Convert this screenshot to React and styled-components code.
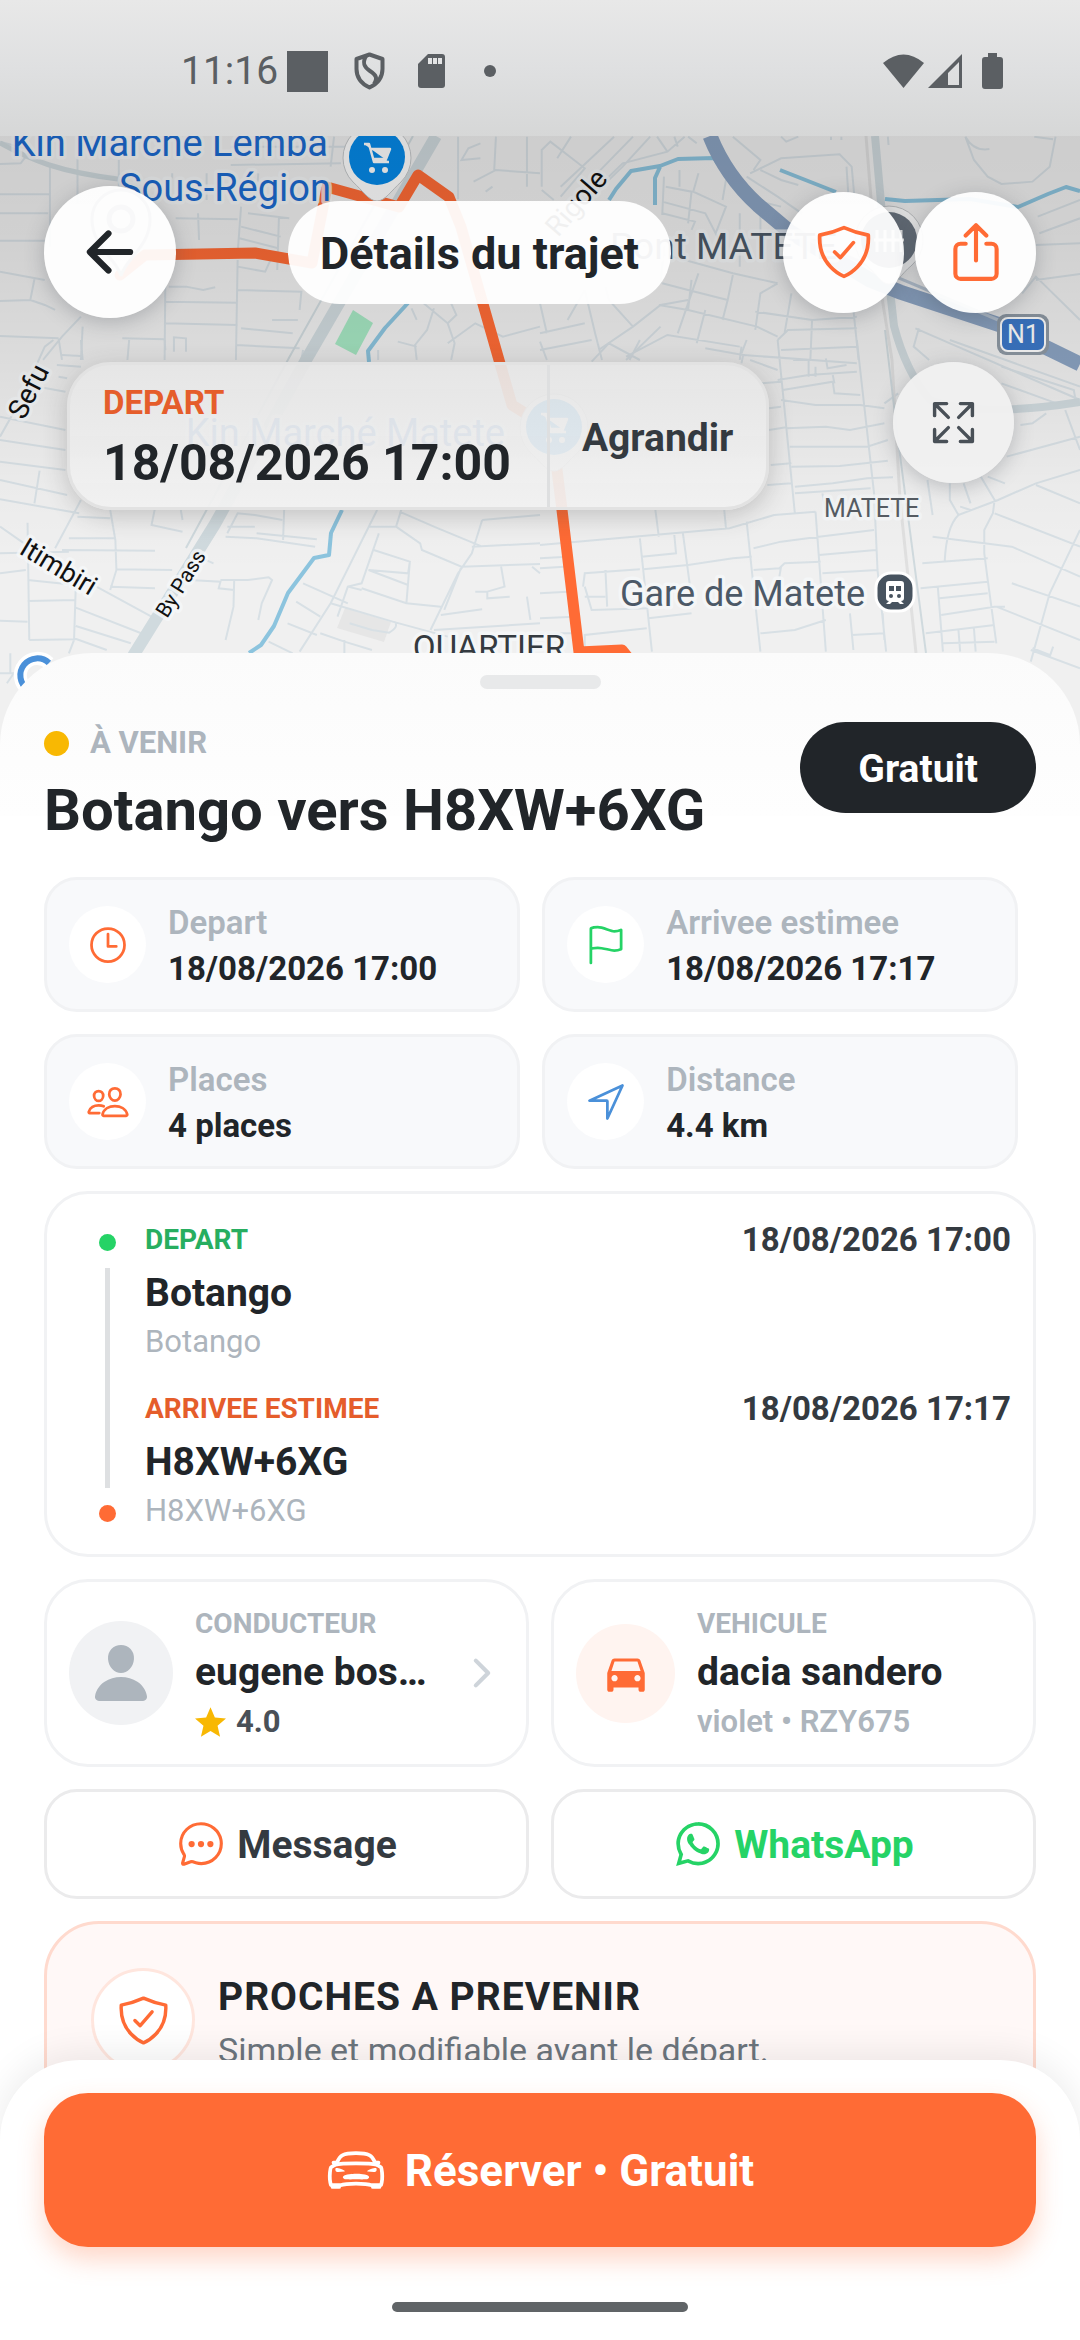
import React from "react";
import styled, { createGlobalStyle } from "styled-components";
import {
  IoArrowBack,
  IoShieldCheckmarkOutline,
  IoShareOutline,
  IoExpandOutline,
  IoTimeOutline,
  IoFlagOutline,
  IoPeopleOutline,
  IoNavigateOutline,
  IoPerson,
  IoChevronForward,
  IoChatbubbleEllipsesOutline,
  IoLogoWhatsapp,
  IoCarSportOutline,
} from "react-icons/io5";
import { MdDirectionsCar } from "react-icons/md";

const color = {
  orange: "#ff6b35",
  orangeDark: "#e55d2b",
  green: "#25d366",
  greenDark: "#27ae60",
  blue: "#4a90d9",
  yellow: "#f8b803",
  ink: "#212529",
  inkSoft: "#343a40",
  slate: "#495057",
  grey: "#6c757d",
  mute: "#adb5bd",
  line: "#f1f2f4",
};

const GlobalStyle = createGlobalStyle`
  *, *::before, *::after { box-sizing: border-box; }
  body {
    margin: 0;
    background: #fff;
    color: ${color.ink};
    font-family: Roboto, "Liberation Sans", sans-serif;
  }
  h1, h2, p { margin: 0; }
  button { font-family: inherit; cursor: pointer; }
  svg { display: block; flex: none; }
`;

const Screen = styled.div`
  display: flex;
  flex-direction: column;
  height: 100vh;
  overflow: hidden;
`;

/* Map header */

const Hero = styled.header`
  position: relative;
  flex: none;
  padding-bottom: 306px;
  margin-bottom: -163px;
  overflow: hidden;
  background: #efefef;
`;

const MapCanvas = styled.svg`
  position: absolute;
  inset: 0;
  width: 100%;
  height: 100%;
`;

const StatusBar = styled.div`
  position: relative;
  display: flex;
  align-items: center;
  height: 136px;
  padding: 6px 77px 0 181px;
  color: #5b5f63;
  background: linear-gradient(#e8e8e8, #dfe0e1 50%, #d6d7d7);
`;

const Clock = styled.time`
  font-size: 39px;
  line-height: 46px;
  margin-right: 9px;
`;

const StatusIcons = styled.div`
  display: flex;
  align-items: center;
  gap: ${(p) => p.$gap}px;
  margin-left: ${(p) => (p.$end ? "auto" : "0")};
`;

const TopRow = styled.div`
  position: relative;
  display: flex;
  align-items: center;
  justify-content: space-between;
  padding: 50px 44px 0;
`;

const ActionGroup = styled.div`
  display: flex;
  gap: 11px;
`;

const RoundButton = styled.button`
  display: flex;
  align-items: center;
  justify-content: center;
  width: ${(p) => p.$size}px;
  height: ${(p) => p.$size}px;
  padding: 0;
  border: 0;
  border-radius: 50%;
  background: ${(p) => (p.$dim ? "rgba(240, 240, 240, 0.96)" : "rgba(255, 255, 255, 0.94)")};
  color: ${(p) => p.$tone};
  box-shadow: 0 4px 20px rgba(60, 70, 80, 0.28);
`;

const ScreenTitle = styled.h1`
  padding: 27px 32px 24px;
  border-radius: 52px;
  background: rgba(255, 255, 255, 0.94);
  font-size: 45px;
  font-weight: 700;
  line-height: 52px;
`;

const MapRow = styled.div`
  position: relative;
  display: flex;
  align-items: flex-start;
  justify-content: space-between;
  padding: 44px 66px 0 67px;
`;

const DepartureCard = styled.div`
  display: flex;
  height: 148px;
  border: 3px solid #e2e2e2;
  border-radius: 44px;
  background: linear-gradient(rgba(230, 230, 230, 0.93), rgba(241, 241, 241, 0.94));
  box-shadow: 0 6px 24px rgba(60, 60, 60, 0.24);
`;

const DepartureText = styled.div`
  display: flex;
  flex-direction: column;
  justify-content: center;
  gap: 12px;
  padding: 2px 36px 0 33px;
  border-right: 3px solid #dedfe0;
`;

const DepartureLabel = styled.span`
  color: ${color.orangeDark};
  font-size: 33px;
  font-weight: 700;
  line-height: 39px;
`;

const DepartureTime = styled.time`
  font-size: 50px;
  font-weight: 700;
  line-height: 58px;
`;

const EnlargeButton = styled.button`
  padding: 3px 33px 0 32px;
  border: 0;
  background: none;
  color: ${color.inkSoft};
  font-size: 39px;
  font-weight: 700;
  line-height: 46px;
`;

/* Sheet */

const Sheet = styled.main`
  position: relative;
  flex: 1;
  min-height: 0;
  overflow: hidden;
  padding: 22px 44px 0;
  border-radius: 92px 92px 0 0;
  background: linear-gradient(#fbfbfb, #fefefe 163px, #fff 163px);
`;

const Handle = styled.div`
  width: 121px;
  height: 14px;
  margin: 0 auto 33px;
  border-radius: 7px;
  background: #e8e9ea;
`;

const TripHead = styled.div`
  display: flex;
  align-items: flex-start;
  justify-content: space-between;
`;

const TripStatus = styled.p`
  display: flex;
  align-items: center;
  gap: 21px;
  margin-top: 3px;
  color: ${color.mute};
  font-size: 31px;
  font-weight: 700;
  line-height: 36px;

  &::before {
    content: "";
    width: 25px;
    height: 25px;
    border-radius: 50%;
    background: ${color.yellow};
  }
`;

const TripTitle = styled.h2`
  margin-top: 14px;
  font-size: 58px;
  font-weight: 700;
  line-height: 70px;
`;

const PriceTag = styled.span`
  padding: 24px 58px 21px;
  border-radius: 46px;
  background: ${color.ink};
  color: #fff;
  font-size: 39px;
  font-weight: 700;
  line-height: 46px;
`;

const InfoGrid = styled.div`
  display: grid;
  grid-template-columns: 48% 48%;
  gap: 22px;
  margin-top: 32px;
`;

const InfoCard = styled.div`
  display: flex;
  align-items: center;
  gap: 22px;
  height: 135px;
  padding: 0 22px;
  border: 3px solid ${color.line};
  border-radius: 33px;
  background: #f8f9fb;
`;

const InfoText = styled.div`
  padding-top: 2px;
  font-size: 33px;
  line-height: 46px;
`;

const IconDisc = styled.span`
  display: flex;
  flex: none;
  align-items: center;
  justify-content: center;
  width: ${(p) => p.$size}px;
  height: ${(p) => p.$size}px;
  border: ${(p) => (p.$ring ? `3px solid ${p.$ring}` : "0")};
  border-radius: 50%;
  background: ${(p) => p.$fill};
  color: ${(p) => p.$tone};
`;

const InfoLabel = styled.p`
  color: ${color.mute};
  font-weight: 600;
`;

const InfoValue = styled.p`
  font-weight: 700;
`;

const RouteCard = styled.section`
  display: flex;
  gap: 29px;
  margin-top: 22px;
  padding: 26px 22px 23px 52px;
  border: 3px solid ${color.line};
  border-radius: 44px;
`;

const RouteRail = styled.div`
  display: flex;
  flex-direction: column;
  align-items: center;
  gap: 17px;
  padding: 14px 0 9px;

  &::before,
  &::after {
    content: "";
    width: 17px;
    height: 17px;
    border-radius: 50%;
    background: ${color.green};
  }

  &::after {
    background: ${color.orange};
  }
`;

const RailLine = styled.span`
  flex: 1;
  width: 5px;
  background: #dee0e2;
`;

const Stops = styled.div`
  flex: 1;
  display: flex;
  flex-direction: column;
  gap: 27px;
`;

const StopHead = styled.div`
  display: flex;
  align-items: center;
  justify-content: space-between;
  margin-bottom: 10px;
`;

const Caption = styled.p`
  color: ${(p) => p.$tone || color.mute};
  font-size: 28px;
  font-weight: 700;
  line-height: 36px;
`;

const StopTime = styled.time`
  color: ${color.inkSoft};
  font-size: 33px;
  font-weight: 700;
  line-height: 39px;
`;

const Name = styled.p`
  overflow: hidden;
  font-size: 39px;
  font-weight: 700;
  line-height: 48px;
  text-overflow: ellipsis;
  white-space: nowrap;
`;

const StopPlace = styled.p`
  margin-top: 5px;
  color: ${color.mute};
  font-size: 31px;
  line-height: 40px;
`;

const Pair = styled.div`
  display: grid;
  grid-template-columns: 1fr 1fr;
  gap: 22px;
  margin-top: 22px;
`;

const PersonCard = styled.section`
  display: flex;
  align-items: center;
  gap: 22px;
  min-width: 0;
  height: 188px;
  padding: 0 22px;
  border: 3px solid ${color.line};
  border-radius: 44px;
`;

const PersonText = styled.div`
  flex: 1;
  display: flex;
  flex-direction: column;
  gap: 6px;
  min-width: 0;
  padding-top: 2px;
`;

const Detail = styled.p`
  display: flex;
  align-items: center;
  gap: 10px;
  color: ${(p) => p.$tone};
  font-size: 31px;
  font-weight: ${(p) => p.$weight};
  line-height: 40px;
`;

const ContactButton = styled.button`
  display: flex;
  align-items: center;
  justify-content: center;
  gap: 11px;
  height: 110px;
  border: 3px solid #ebebec;
  border-radius: 33px;
  background: #fff;
  color: ${(p) => p.$tone};
  font-size: 39px;
  font-weight: 700;
  line-height: 46px;

  svg {
    color: ${(p) => p.$iconTone};
  }
`;

const ButtonText = styled.span`
  padding-top: 2px;
`;

const AlertCard = styled.section`
  display: flex;
  align-items: flex-start;
  gap: 23px;
  margin-top: 22px;
  padding: 44px 44px 88px;
  border: 3px solid #ffdace;
  border-radius: 55px;
  background: #fff8f7;
`;

const AlertTitle = styled.h2`
  margin-top: 6px;
  font-size: 39px;
  font-weight: 700;
  line-height: 46px;
  letter-spacing: 1px;
`;

const AlertText = styled.p`
  margin-top: 10px;
  color: ${color.grey};
  font-size: 34px;
  line-height: 40px;
`;

/* Footer */

const Footer = styled.footer`
  position: relative;
  flex: none;
  margin-top: -80px;
  padding: 33px 44px 28px;
  border-radius: 80px 80px 0 0;
  background: #fff;
  box-shadow: 0 -6px 36px rgba(0, 0, 0, 0.08);
`;

const BookButton = styled.button`
  display: flex;
  align-items: center;
  justify-content: center;
  gap: 19px;
  width: 100%;
  height: 154px;
  border: 0;
  border-radius: 44px;
  background: ${color.orange};
  color: #fff;
  font-size: 44px;
  font-weight: 700;
  line-height: 52px;
  box-shadow: 0 12px 26px rgba(255, 107, 53, 0.28);
`;

const HomeBar = styled.div`
  width: 296px;
  height: 10px;
  margin: 55px auto 0;
  border-radius: 5px;
  background: #606467;
`;

/* Drawings */

const streetsNW = `M0 425L90 450 60 490 0 492M100 470L145 500 215 515 340 540M145 500L145 740M0 583L145 583M225 470L225 610 M345 480L345 560M0 640L140 640M0 722L130 722M0 815L130 840M100 838L88 900 0 903M88 900L130 915 160 930M235 950L180 1010 125 1080M0 1008L170 1015M170 1015L180 1080M240 980L235 1080M480 850L478 1080M355 1015L478 1018M505 1055L505 1012 540 1015 540 1055M478 970L690 975M690 780L685 1080M480 905L690 908M575 640L578 720M510 655L690 658M700 620L690 760M700 680L815 710M695 715L808 745M720 640L840 655M810 650L805 810M690 800L770 815 790 770 835 790M690 870L875 875 870 930M790 960L865 960M685 1035L870 1045M670 495L990 490M670 440L1010 440M600 520L600 600M970 410L960 500M500 520L500 600M750 520L745 590M490 860L540 860 590 870 625 862M1330 410L1330 598M1395 430L1360 445 1340 480 1395 475M1440 410L1435 510M1375 545L1440 510 1568 520M1410 575L1430 560M1530 410L1530 560M1568 980L1460 1010 1380 970 1300 1030M1230 910L1300 970 1320 1030 1310 1080M1300 970L1325 945 1310 910M1210 1080L1205 1035 1240 990 1260 925M1195 925L1210 960M1098 1080L1098 1050M1155 1025L1210 1040M875 1080L880 1050M700 985L850 1000`;
const streetsNE = `M5 560L5 450 30 425 130 505 60 590M50 475L90 410M60 560L215 410M100 590L270 410M150 590L240 500 320 410M130 600L240 490 370 455 420 410M340 410L370 455M390 410L400 440M430 410L455 430M5 570L40 600M360 530L355 645M355 605L480 640 520 720M355 640L450 665 440 690M365 560L440 575 430 670M405 510L405 560M460 520L445 575 540 620 510 700M540 540L530 600M620 600L700 620M600 530L690 590 760 640M640 510L700 540 750 555M610 520L700 475 870 463 905 500 912 580M890 500L895 580M560 410L640 480 620 510M700 410L715 425 750 410M845 410L845 420M875 410L875 420M1010 410L1012 435M1235 410L1260 480 1300 530 1340 552 1430 545 1480 500 1497 410M1235 410Q1260 455 1305 447M1435 410L1490 418M1450 700L1568 655M1445 650L1568 600M1400 880L1440 830 1568 960M1440 840L1568 822M1440 735L1568 730M350 850L360 740M270 720L350 760 560 820 690 850M355 850L430 870 545 900M345 915L430 930 630 980 690 1010M440 840L430 930M460 820L400 1000M560 825L545 900 530 960M690 850L640 880 625 990M625 935L790 960 920 950M790 960L785 1080M730 880L710 1000M690 1020L720 990 920 985M700 1050L920 1040M430 900L350 915 270 980 170 1050M270 980L200 900 190 860M130 870L160 1000 180 1080M0 1000L130 970M0 1050L150 1020M350 980L250 1080M250 1070L370 1005 580 1040M480 930L455 1030M580 1080L585 1040M910 930L925 1080M1100 985L1085 1040 1130 1080M1090 985L1568 1200M0 910L20 1000M130 870L80 960M580 640L580 800M640 640L640 770`;
const streetsSW = `M0 290L60 180 130 20 155 0M235 0L240 60M375 0L370 60M480 30L478 0M180 45L235 48M165 75L235 80M170 110L195 115M110 140L190 155M0 230L190 270M0 300L190 330M0 365L190 390M0 420L195 465M115 392L100 490M0 478L230 520M235 480L160 625M320 510L335 600 338 690 320 750M225 530L320 535M200 595L335 595M180 630L450 632M335 688L500 690M80 548L85 900M0 560L70 610M0 640L200 635M0 700L75 690M80 720L220 735M80 783L220 780M0 842L80 845M85 900L220 898M220 740L215 900 200 940M280 740L440 830M220 803L410 880M220 858L380 910M215 895L310 930M320 740L450 745M30 940L30 1000M0 1000L60 1000M20 1030L40 1000M450 505L440 555 530 575M530 540L525 510M660 580L690 520 740 525 820 540M655 590L745 595 915 620M660 560L740 560M825 510L822 600M745 580L920 598M575 650L620 670M550 720L640 725 635 745 680 750M640 720L720 720 780 712 790 720 760 790 750 840M680 720L678 800 655 900M1095 510L960 790 870 935M1165 510L1150 560 1070 560M1100 580L1050 730 1010 740 980 830M1085 630L1190 665 1185 700 1070 690M1190 665L1180 790M1070 690L1185 735M1050 745L1180 790 1280 800M1150 560L1220 610 1225 630 1340 680 1568 672M1160 515L1260 560 1400 620M1400 540L1370 640 1330 700 1250 870M1400 540L1568 525M1370 620L1568 610M1340 680L1290 810M1280 825L1400 808M1260 870L1568 850M1380 755L1415 755 1415 775 1480 770M1415 755L1465 740 1455 680M1530 770L1540 840M880 730L1010 790M860 785L930 830M835 850L920 885M930 880L1000 905 1080 930M1010 740L1050 750M1015 850L1080 870 1130 878Q1160 860 1145 845M780 905L850 940M960 790L1140 845 1300 890M1000 900L1000 940M1545 680L1568 700`;
const streetsSE = `M0 5L20 60M150 65L200 10 290 60M290 0L260 60M600 0L585 40M480 25L590 45 585 70M590 45L920 70M690 0L740 520M920 0L970 460 980 690 1005 935M610 60L690 90M735 60L780 60M780 60L780 110M800 80L800 110M830 55L835 85 890 75M690 120L780 105 920 95M705 150L850 125 855 160 930 165M850 105L855 130M640 130L700 125M700 180L800 195 930 195 1000 205M665 205L700 200M715 265L830 260 900 270 1000 250M665 270L715 262M725 320L830 320 950 320 1010 300M730 380L870 378 1010 362M670 375L730 370M740 440L850 430 950 415 1025 412M660 435L730 430M740 460L960 445M820 460L830 520M0 615L330 585 550 565 680 525 800 515M0 655L80 650M335 510L345 590M535 510L540 565M600 545L640 935M800 515L830 935M290 595L325 935M415 580L435 735M390 585L395 640 295 650M300 688L430 675 560 655 615 650M130 935L130 885 310 865M125 740L130 700 290 688M190 690L195 800M130 770L190 770M130 740L150 810 315 805M315 835L440 820M620 625L700 605 810 590 970 570M810 645L975 630M620 690L695 685 710 670 815 665M695 710L700 680M820 700L980 690M640 880L740 870 830 840M900 820L910 930M995 820L1000 900M905 885L1000 880M0 685L70 680M0 760L80 755M0 835L100 830M0 880L110 880M1125 420L1140 525M1190 430L1190 480 1215 525 1330 480 1440 430 1568 390M1230 430L1250 490M1280 410L1320 480 1315 520 1290 570 1290 640 1300 720 1325 910M1215 525Q1180 560 1175 665M1220 500L1250 510M1110 670L1300 655M1140 590L1370 620 1568 710M1320 520L1568 620M1440 435L1568 490M1568 570L1480 760 1425 965M1370 730L1568 800M1325 800L1568 900M1105 745L1300 725M1155 740L1170 935M1160 775L1300 760M1165 825L1320 800 1350 800M1120 880L1320 855M1215 870L1220 935M1260 865L1265 935M1170 910L1320 905M1425 930L1568 985M1490 920L1480 950M1430 925L1480 945M1355 350L1568 290M1340 130L1500 190 1568 180M1340 80L1550 150 1555 180M1525 210L1568 330M1300 410L1350 430M1190 0L1568 140M1395 255L1430 250 1470 220M1000 190L1040 160`;

function Streets({ x, y, d }) {
  return (
    <path
      d={d}
      transform={`translate(${x} ${y}) scale(0.3444 0.3333)`}
      fill="none"
      stroke="#d8e0e5"
      strokeWidth="2"
      vectorEffect="non-scaling-stroke"
    />
  );
}

function MapLabel({ x, y, size, fill, angle = 0, anchor = "start", children }) {
  return (
    <text
      x={x}
      y={y}
      fontSize={size}
      fill={fill}
      textAnchor={anchor}
      transform={`rotate(${angle} ${x} ${y})`}
      stroke="#f6f8fa"
      strokeWidth="7"
      strokeOpacity="0.75"
      strokeLinejoin="round"
      paintOrder="stroke"
    >
      {children}
    </text>
  );
}

function ShopPin({ x, y }) {
  return (
    <g transform={`translate(${x} ${y})`}>
      <path d="M0 44C-8 44 -14 34 -24 25A34 34 0 1 1 24 25C14 34 8 44 0 44Z" fill="#fff" stroke="#c5c8ca" strokeWidth="1" />
      <circle r="28" fill="#0589e8" />
      <path d="M-13 -13h5l5 18h15M-6 -8h19l-4 10h-13" fill="#fff" stroke="#fff" strokeWidth="2.500" strokeLinejoin="round" />
      <circle cx="-5" cy="13" r="3" fill="#fff" />
      <circle cx="8" cy="13" r="3" fill="#fff" />
    </g>
  );
}

function CityMap() {
  return (
    <MapCanvas viewBox="0 0 1080 816" preserveAspectRatio="xMidYMin slice" aria-label="Carte du trajet" role="img">
      <defs>
        <linearGradient id="shade" x1="0" y1="0" x2="0" y2="1">
          <stop offset="0.16" stopColor="#000" stopOpacity="0.145" />
          <stop offset="0.3" stopColor="#000" stopOpacity="0.13" />
          <stop offset="0.45" stopColor="#000" stopOpacity="0.08" />
          <stop offset="0.6" stopColor="#000" stopOpacity="0.02" />
          <stop offset="0.7" stopColor="#000" stopOpacity="0" />
        </linearGradient>
      </defs>
      <rect width="1080" height="816" fill="#f0f0f0" />
      <path d="M345 608l46 14-7 20-47-14z" fill="#e6e6e6" />
      <Streets x={0} y={0} d={streetsNW} />
      <Streets x={540} y={0} d={streetsNE} />
      <Streets x={0} y={340} d={streetsSW} />
      <Streets x={540} y={340} d={streetsSE} />

      <g fill="none" stroke="#d0dade" strokeLinejoin="round">
        <path d="M0 143C30 160 60 172 118 179" strokeWidth="5" />
        <path d="M436 136L306 360 215 524 133 656" strokeWidth="12" />
        <path d="M413 136L290 356 186 548" strokeWidth="2" />
        <path d="M875 136L884 236 894 326Q906 372 930 400Q980 418 1080 402" strokeWidth="8" />
        <path d="M866 136L876 260 892 360 900 500 916 653" strokeWidth="3" stroke="#e0e0e0" />
        <path d="M885 330L898 440 926 653" strokeWidth="2" />
      </g>
      <path d="M353 310l20 13-17 32-21-11z" fill="#a5e6c2" />

      <g fill="none" stroke="#8cc4de" strokeWidth="4" strokeLinejoin="round">
        <path d="M609 200L616 189 631 171 660 166 678 159 714 158 718 164M660 167L655 178 655 205M780 170L836 192" />
        <path d="M885 199L905 201 970 199 1018 207 1048 194 1066 187 1080 191" />
        <path d="M408 303L385 328 368 351 369 362M342 510L331 533 329 555 314 558 288 593 274 626 261 645 249 653" />
      </g>

      <path d="M710 136Q726 176 758 205L790 232 870 280 900 292 1000 325 1080 364" fill="none" stroke="#8ba3c2" strokeWidth="15" />
      <path d="M790 232L1010 325" fill="none" stroke="#b9c6d4" strokeWidth="3" />

      <path
        d="M120 275L145 255 255 253 312 263 327 187 399 207 418 175 449 197 461 227 499 360 512 405 552 430 562 510 579 652 622 650 630 660"
        fill="none"
        stroke={color.orange}
        strokeWidth="11"
        strokeLinejoin="round"
        strokeLinecap="round"
      />

      <MapLabel x={328} y={156} size={38} fill="#1b6ad0" anchor="end">Kin Marché Lemba</MapLabel>
      <MapLabel x={331} y={201} size={38} fill="#1b6ad0" anchor="end">Sous-Région</MapLabel>
      <MapLabel x={505} y={446} size={38} fill="#1b6ad0" anchor="end">Kin Marché Matete</MapLabel>
      <MapLabel x={558} y={238} size={28} fill="#111" angle={-49}>Rigole</MapLabel>
      <MapLabel x={610} y={259} size={37} fill="#4c5967">Pont MATETE</MapLabel>
      <MapLabel x={24} y={421} size={28} fill="#111" angle={-63}>Sefu</MapLabel>
      <MapLabel x={18} y={553} size={27} fill="#111" angle={31}>Itimbiri</MapLabel>
      <MapLabel x={167} y={619} size={21} fill="#111" angle={-58}>By Pass</MapLabel>
      <MapLabel x={824} y={517} size={25} fill="#565c63">MATETE</MapLabel>
      <MapLabel x={620} y={606} size={36} fill="#4c5967">Gare de Matete</MapLabel>
      <MapLabel x={413} y={659} size={33} fill="#343a40">QUARTIER</MapLabel>

      <ShopPin x={377} y={157} />
      <ShopPin x={554} y={427} />

      <g transform="translate(121 219)">
        <path d="M0 57C-4 40 -29 28 -29 0A29 29 0 1 1 29 0C29 28 4 40 0 57Z" fill="#fff" stroke="#9aa3aa" strokeWidth="3" />
        <circle r="12" fill="none" stroke="#9aa3aa" strokeWidth="5" />
      </g>
      <g transform="translate(889 240)">
        <path d="M0 44C-8 44 -12 34 -22 26A34 34 0 1 1 22 26C12 34 8 44 0 44Z" fill="#fff" stroke="#c5c8ca" />
        <circle r="28" fill="#6d7782" />
        <path d="M-12 -10v22M-4 -10v22M4 -10v22M12 -10v22M-15 0h30" stroke="#fff" strokeWidth="3" />
      </g>
      <g transform="translate(895 592)">
        <rect x="-19" y="-19" width="38" height="38" rx="15" fill="#47535f" stroke="#fff" strokeWidth="3" />
        <path d="M-9 -8q0-3 3-3h12q3 0 3 3v14q0 3-3 3l3 3h-4l-2-2h-6l-2 2h-4l3-3q-3 0-3-3z" fill="#fff" />
        <path d="M-6 -6h5v5h-5zM1 -6h5v5h-5z" fill="#47535f" />
        <circle cx="-4" cy="4" r="2" fill="#47535f" />
        <circle cx="4" cy="4" r="2" fill="#47535f" />
      </g>
      <g>
        <rect x="997" y="314" width="52" height="41" rx="9" fill="#8f9aa5" />
        <rect x="1001" y="318" width="44" height="33" rx="7" fill="#3c78c8" stroke="#fff" strokeWidth="2" />
        <text x="1023" y="343" fontSize="25" fill="#fff" textAnchor="middle">N1</text>
      </g>
      <path d="M49 663A17 17 0 1 0 52 684H38" fill="none" stroke="#fff" strokeWidth="13" />
      <path d="M49 663A17 17 0 1 0 52 684H38" fill="none" stroke={color.blue} strokeWidth="6" />
      <rect width="1080" height="816" fill="url(#shade)" />
    </MapCanvas>
  );
}

function StatusBarContent() {
  return (
    <StatusBar>
      <Clock>11:16</Clock>
      <StatusIcons $gap={26}>
        <svg width="41" height="41" viewBox="0 0 41 41" aria-hidden="true">
          <path d="M0 0h41v41H0z" fill="currentColor" />
        </svg>
        <svg width="31" height="38" viewBox="0 0 31 38" aria-hidden="true" fill="none" stroke="currentColor" strokeWidth="4">
          <path d="M15.500 2.500L28.500 7V17C28.500 26 23 32 15.500 35.500C8 32 2.500 26 2.500 17V7Z" strokeLinejoin="round" />
          <path d="M12 4C8 11 10 15 16 19C22 23 24 26 20 32" />
        </svg>
        <svg width="38" height="34" viewBox="0 0 38 34" aria-hidden="true">
          <path d="M17 0h14q3 0 3 3v28q0 3-3 3H10q-3 0-3-3V10z" fill="currentColor" />
          <path d="M17 4h4v6h-4zM22 4h4v6h-4zM27 4h4v6h-4z" fill="#e3e4e5" />
        </svg>
        <svg width="31" height="12" viewBox="0 0 31 12" aria-hidden="true">
          <circle cx="15" cy="6" r="6" fill="currentColor" />
        </svg>
      </StatusIcons>
      <StatusIcons $gap={4} $end>
        <svg width="41" height="34" viewBox="0 0 41 34" aria-hidden="true">
          <path d="M20.500 34L0 9Q20.500 -8 41 9Z" fill="currentColor" />
        </svg>
        <svg width="34" height="34" viewBox="0 0 34 34" aria-hidden="true">
          <path d="M34 0V34H0ZM31 8L20 19V31H31Z" fill="currentColor" fillRule="evenodd" />
        </svg>
        <svg width="37" height="36" viewBox="0 0 37 36" aria-hidden="true">
          <path d="M22 0h9v4h3q3 0 3 3v26q0 3-3 3H19q-3 0-3-3V7q0-3 3-3h3z" fill="currentColor" />
        </svg>
      </StatusIcons>
    </StatusBar>
  );
}

function RatingStar() {
  return (
    <svg width="31" height="30" viewBox="2 2 20 19" aria-hidden="true">
      <path d="M12 17.270L18.180 21l-1.640-7.030L22 9.240l-7.190-.610L12 2 9.190 8.630 2 9.240l5.460 4.730L5.820 21z" fill={color.yellow} />
    </svg>
  );
}

function Info({ icon: Icon, tone, label, value }) {
  return (
    <InfoCard>
      <IconDisc $size={77} $fill="#fff" $tone={tone}>
        <Icon size={44} />
      </IconDisc>
      <InfoText>
        <InfoLabel>{label}</InfoLabel>
        <InfoValue>{value}</InfoValue>
      </InfoText>
    </InfoCard>
  );
}

function Stop({ label, tone, time, name, place }) {
  return (
    <div>
      <StopHead>
        <Caption $tone={tone}>{label}</Caption>
        <StopTime>{time}</StopTime>
      </StopHead>
      <Name>{name}</Name>
      <StopPlace>{place}</StopPlace>
    </div>
  );
}

export default function App() {
  return (
    <Screen>
      <GlobalStyle />
      <Hero>
        <CityMap />
        <StatusBarContent />
        <TopRow>
          <RoundButton $size={132} $tone={color.ink} aria-label="Retour">
            <IoArrowBack size={66} />
          </RoundButton>
          <ScreenTitle>Détails du trajet</ScreenTitle>
          <ActionGroup>
            <RoundButton $size={121} $tone={color.orange} aria-label="Sécurité">
              <IoShieldCheckmarkOutline size={60} />
            </RoundButton>
            <RoundButton $size={121} $tone={color.orange} aria-label="Partager">
              <IoShareOutline size={66} />
            </RoundButton>
          </ActionGroup>
        </TopRow>
        <MapRow>
          <DepartureCard>
            <DepartureText>
              <DepartureLabel>DEPART</DepartureLabel>
              <DepartureTime>18/08/2026 17:00</DepartureTime>
            </DepartureText>
            <EnlargeButton>Agrandir</EnlargeButton>
          </DepartureCard>
          <RoundButton $size={121} $dim $tone={color.slate} aria-label="Plein écran">
            <IoExpandOutline size={55} />
          </RoundButton>
        </MapRow>
      </Hero>

      <Sheet>
        <Handle />
        <TripHead>
          <div>
            <TripStatus>À VENIR</TripStatus>
            <TripTitle>Botango vers H8XW+6XG</TripTitle>
          </div>
          <PriceTag>Gratuit</PriceTag>
        </TripHead>

        <InfoGrid>
          <Info icon={IoTimeOutline} tone={color.orange} label="Depart" value="18/08/2026 17:00" />
          <Info icon={IoFlagOutline} tone={color.green} label="Arrivee estimee" value="18/08/2026 17:17" />
          <Info icon={IoPeopleOutline} tone={color.orange} label="Places" value="4 places" />
          <Info icon={IoNavigateOutline} tone={color.blue} label="Distance" value="4.4 km" />
        </InfoGrid>

        <RouteCard>
          <RouteRail>
            <RailLine />
          </RouteRail>
          <Stops>
            <Stop label="DEPART" tone={color.greenDark} time="18/08/2026 17:00" name="Botango" place="Botango" />
            <Stop label="ARRIVEE ESTIMEE" tone={color.orangeDark} time="18/08/2026 17:17" name="H8XW+6XG" place="H8XW+6XG" />
          </Stops>
        </RouteCard>

        <Pair>
          <PersonCard>
            <IconDisc $size={104} $fill="#f1f2f4" $tone={color.mute}>
              <IoPerson size={64} />
            </IconDisc>
            <PersonText>
              <Caption>CONDUCTEUR</Caption>
              <Name>eugene bos…</Name>
              <Detail $tone={color.slate} $weight={700}>
                <RatingStar />
                4.0
              </Detail>
            </PersonText>
            <IoChevronForward size={44} color="#ced4da" />
          </PersonCard>
          <PersonCard>
            <IconDisc $size={99} $fill="#fff4f0" $tone={color.orange}>
              <MdDirectionsCar size={50} />
            </IconDisc>
            <PersonText>
              <Caption>VEHICULE</Caption>
              <Name>dacia sandero</Name>
              <Detail $tone={color.mute} $weight={600}>violet • RZY675</Detail>
            </PersonText>
          </PersonCard>
        </Pair>

        <Pair>
          <ContactButton $tone={color.inkSoft} $iconTone={color.orange}>
            <IoChatbubbleEllipsesOutline size={50} />
            <ButtonText>Message</ButtonText>
          </ContactButton>
          <ContactButton $tone={color.green} $iconTone={color.green}>
            <IoLogoWhatsapp size={50} />
            <ButtonText>WhatsApp</ButtonText>
          </ContactButton>
        </Pair>

        <AlertCard>
          <IconDisc $size={104} $fill="#fff" $ring="#ffe6de" $tone={color.orange}>
            <IoShieldCheckmarkOutline size={55} />
          </IconDisc>
          <div>
            <AlertTitle>PROCHES A PREVENIR</AlertTitle>
            <AlertText>Simple et modifiable avant le départ.</AlertText>
          </div>
        </AlertCard>
      </Sheet>

      <Footer>
        <BookButton>
          <IoCarSportOutline size={60} />
          <ButtonText>Réserver • Gratuit</ButtonText>
        </BookButton>
        <HomeBar />
      </Footer>
    </Screen>
  );
}
